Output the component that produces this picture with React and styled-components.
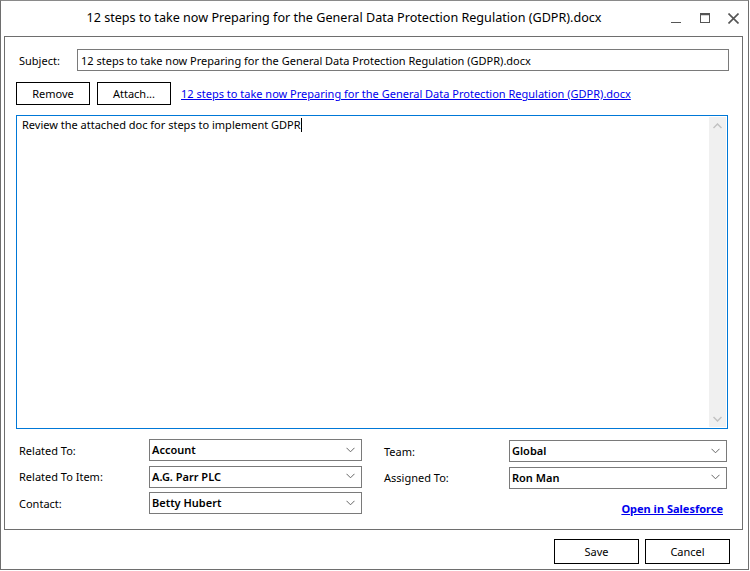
import React from "react";
import styled, { createGlobalStyle } from "styled-components";

const Global = createGlobalStyle`
  html, body { margin: 0; padding: 0; background: #fff; }
  body { font-family: "Noto Sans", "Open Sans", sans-serif; }
`;

const Window = styled.div`
  width: 749px;
  height: 570px;
  box-sizing: border-box;
  border: 1px solid #6e6e6e;
  border-top-color: #8a8a8a;
  background: #fff;
  display: flex;
  flex-direction: column;
`;

const TitleBar = styled.div`
  height: 35px;
  display: flex;
  align-items: center;
  position: relative;
  flex: none;
`;

const Title = styled.div`
  flex: 1;
  text-align: center;
  font-size: 12.6px;
  color: #000;
  padding-right: 61px;
  margin-top: -2px;
`;

const Controls = styled.div`
  position: absolute;
  right: 0;
  top: 0;
  height: 34px;
  display: flex;
  align-items: center;
`;

const Ctl = styled.div`
  width: 29px;
  height: 30px;
  display: flex;
  align-items: center;
  justify-content: center;
`;

const Panel = styled.div`
  margin: 0 5px 0 3px;
  height: 494px;
  box-sizing: border-box;
  border: 1px solid #6e6e6e;
  padding: 12px 13px 0 11px;
  display: flex;
  flex-direction: column;
  flex: none;
`;

const Row = styled.div`
  display: flex;
  align-items: center;
  margin-top: ${(p) => p.$mt || 0}px;
`;

const Label = styled.div`
  font-size: 11px;
  color: #000;
  width: ${(p) => p.$w}px;
  padding-left: 3px;
  box-sizing: border-box;
  flex: none;
`;

const TextBox = styled.div`
  flex: 1;
  height: 22px;
  box-sizing: border-box;
  border: 1px solid #7a7a7a;
  font-size: 11px;
  padding: 0 3px;
  display: flex;
  align-items: center;
  white-space: nowrap;
`;

const Button = styled.div`
  width: ${(p) => p.$w}px;
  height: ${(p) => p.$h || 23}px;
  box-sizing: border-box;
  border: 1px solid #000;
  background: #fff;
  display: flex;
  align-items: center;
  justify-content: center;
  font-size: 11px;
  margin-right: ${(p) => p.$mr || 0}px;
  flex: none;
`;

const Link = styled.a`
  color: #0000ee;
  text-decoration: underline;
  font-size: 11px;
  font-weight: ${(p) => (p.$bold ? 700 : 400)};
  margin-left: ${(p) => p.$ml || 0}px;
  white-space: nowrap;
  cursor: pointer;
`;

const TextArea = styled.div`
  margin-top: 10px;
  height: 314px;
  box-sizing: border-box;
  border: 1px solid #0078d7;
  display: flex;
  margin-right: 1px;
`;

const TextContent = styled.div`
  flex: 1;
  padding: 1px 5px;
  font-size: 11px;
  color: #000;
`;

const Caret = styled.span`
  display: inline-block;
  width: 1px;
  height: 14px;
  background: #000;
  vertical-align: -3px;
`;

const ScrollBar = styled.div`
  width: 17px;
  background: #f0f0f0;
  display: flex;
  flex-direction: column;
  justify-content: space-between;
  align-items: center;
  margin: 1px 1px 1px 0;
`;

const Arrow = styled.div`
  height: 17px;
  display: flex;
  align-items: center;
  justify-content: center;
`;

const Fields = styled.div`
  display: flex;
  margin-top: 10px;
`;

const Column = styled.div`
  display: flex;
  flex-direction: column;
  gap: 4.5px;
  width: ${(p) => p.$w}px;
  margin-left: ${(p) => p.$ml || 0}px;
  margin-top: ${(p) => p.$mt || 0}px;
`;

const FieldRow = styled.div`
  display: flex;
  align-items: center;
`;

const Select = styled.div`
  width: ${(p) => p.$w}px;
  height: 22px;
  box-sizing: border-box;
  border: 1px solid #7a7a7a;
  display: flex;
  align-items: center;
  padding: 0 6px 1px 2px;
  font-size: 11px;
  font-weight: 600;
  justify-content: space-between;
`;

const LinkRow = styled.div`
  display: flex;
  justify-content: flex-end;
  padding-right: 4px;
  margin-top: 8px;
`;

const Footer = styled.div`
  flex: 1;
  display: flex;
  justify-content: flex-end;
  align-items: flex-start;
  padding: 9px 18px 0 0;
`;

const Chevron = () => (
  <svg width="9" height="6" viewBox="0 0 9 6">
    <path d="M0.5 0.8 L4.5 4.8 L8.5 0.8" fill="none" stroke="#666" strokeWidth="1" />
  </svg>
);

const title = "12 steps to take now Preparing for the General Data Protection Regulation (GDPR).docx";

export default function App() {
  return (
    <>
      <Global />
      <Window>
        <TitleBar>
          <Title>{title}</Title>
          <Controls>
            <Ctl>
              <svg width="10" height="10" viewBox="0 0 10 10">
                <path d="M0 9.5 H10" stroke="#555" strokeWidth="1" />
              </svg>
            </Ctl>
            <Ctl>
              <svg width="10" height="10" viewBox="0 0 10 10">
                <rect x="0.5" y="0.5" width="9" height="9" fill="none" stroke="#555" />
                <path d="M0 1.5 H10" stroke="#555" strokeWidth="1.5" />
              </svg>
            </Ctl>
            <Ctl>
              <svg width="11" height="11" viewBox="0 0 11 11">
                <path d="M0.5 0.5 L10.5 10.5 M10.5 0.5 L0.5 10.5" stroke="#555" strokeWidth="1.6" />
              </svg>
            </Ctl>
          </Controls>
        </TitleBar>
        <Panel>
          <Row>
            <Label $w={61}>Subject:</Label>
            <TextBox>{title}</TextBox>
          </Row>
          <Row $mt={11}>
            <Button $w={74} $mr={7}>Remove</Button>
            <Button $w={74}>Attach...</Button>
            <Link $ml={10}>{title}</Link>
          </Row>
          <TextArea>
            <TextContent>
              Review the attached doc for steps to implement GDPR<Caret />
            </TextContent>
            <ScrollBar>
              <Arrow>
                <svg width="9" height="6" viewBox="0 0 9 6">
                  <path d="M0.5 5 L4.5 1 L8.5 5" fill="none" stroke="#c2c2c2" strokeWidth="1.5" />
                </svg>
              </Arrow>
              <Arrow>
                <svg width="9" height="6" viewBox="0 0 9 6">
                  <path d="M0.5 1 L4.5 5 L8.5 1" fill="none" stroke="#c2c2c2" strokeWidth="1.5" />
                </svg>
              </Arrow>
            </ScrollBar>
          </TextArea>
          <Fields>
            <Column $w={346}>
              <FieldRow>
                <Label $w={133}>Related To:</Label>
                <Select $w={213}>Account<Chevron /></Select>
              </FieldRow>
              <FieldRow>
                <Label $w={133}>Related To Item:</Label>
                <Select $w={213}>A.G. Parr PLC<Chevron /></Select>
              </FieldRow>
              <FieldRow>
                <Label $w={133}>Contact:</Label>
                <Select $w={213}>Betty Hubert<Chevron /></Select>
              </FieldRow>
            </Column>
            <Column $w={346} $ml={19} $mt={1}>
              <FieldRow>
                <Label $w={128}>Team:</Label>
                <Select $w={218}>Global<Chevron /></Select>
              </FieldRow>
              <FieldRow>
                <Label $w={128}>Assigned To:</Label>
                <Select $w={218}>Ron Man<Chevron /></Select>
              </FieldRow>
              <LinkRow>
                <Link $bold>Open in Salesforce</Link>
              </LinkRow>
            </Column>
          </Fields>
        </Panel>
        <Footer>
          <Button $w={85} $h={25} $mr={6}>Save</Button>
          <Button $w={85} $h={25}>Cancel</Button>
        </Footer>
      </Window>
    </>
  );
}
